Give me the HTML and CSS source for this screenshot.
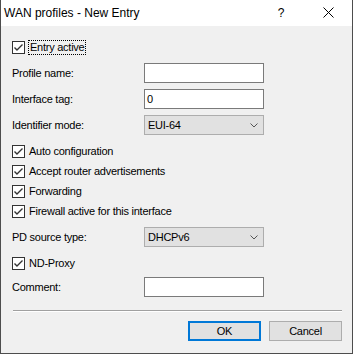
FILE: index.html
```html
<!DOCTYPE html>
<html lang="en">
<head>
  <meta charset="UTF-8" />
  <title>WAN profiles - New Entry</title>
  <link rel="stylesheet" href="styles.css">
</head>
<body>

<div class="window">

  <div class="titlebar">
    <span class="title">WAN profiles - New Entry</span>
    <span class="help">?</span>
    <span class="close">
      <svg width="11" height="11" viewBox="0 0 11 11"><path d="M0.5 0.5 L10.5 10.5 M10.5 0.5 L0.5 10.5" stroke="#000" stroke-width="1" fill="none"/></svg>
    </span>
  </div>

  <div class="content">

    <div class="row check first">
      <span class="box"><svg width="11" height="11" viewBox="0 0 11 11"><path d="M1.5 5.5 L4 8 L9.5 2.5" stroke="#333" stroke-width="1.4" fill="none"/></svg></span>
      <span class="focus">Entry active</span>
    </div>

    <div class="row field">
      <label>Profile name:</label>
      <div class="input"></div>
    </div>

    <div class="row field">
      <label>Interface tag:</label>
      <div class="input">0</div>
    </div>

    <div class="row field">
      <label>Identifier mode:</label>
      <div class="select">EUI-64<svg class="chev" width="8" height="5" viewBox="0 0 8 5"><path d="M0.5 0.5 L4 4 L7.5 0.5" stroke="#555" stroke-width="1" fill="none"/></svg></div>
    </div>

    <div class="checks">
      <div class="row check">
        <span class="box"><svg width="11" height="11" viewBox="0 0 11 11"><path d="M1.5 5.5 L4 8 L9.5 2.5" stroke="#333" stroke-width="1.4" fill="none"/></svg></span>
        <span class="text">Auto configuration</span>
      </div>
      <div class="row check">
        <span class="box"><svg width="11" height="11" viewBox="0 0 11 11"><path d="M1.5 5.5 L4 8 L9.5 2.5" stroke="#333" stroke-width="1.4" fill="none"/></svg></span>
        <span class="text">Accept router advertisements</span>
      </div>
      <div class="row check">
        <span class="box"><svg width="11" height="11" viewBox="0 0 11 11"><path d="M1.5 5.5 L4 8 L9.5 2.5" stroke="#333" stroke-width="1.4" fill="none"/></svg></span>
        <span class="text">Forwarding</span>
      </div>
      <div class="row check">
        <span class="box"><svg width="11" height="11" viewBox="0 0 11 11"><path d="M1.5 5.5 L4 8 L9.5 2.5" stroke="#333" stroke-width="1.4" fill="none"/></svg></span>
        <span class="text">Firewall active for this interface</span>
      </div>
    </div>

    <div class="row field">
      <label>PD source type:</label>
      <div class="select">DHCPv6<svg class="chev" width="8" height="5" viewBox="0 0 8 5"><path d="M0.5 0.5 L4 4 L7.5 0.5" stroke="#555" stroke-width="1" fill="none"/></svg></div>
    </div>

    <div class="row check nd">
      <span class="box"><svg width="11" height="11" viewBox="0 0 11 11"><path d="M1.5 5.5 L4 8 L9.5 2.5" stroke="#333" stroke-width="1.4" fill="none"/></svg></span>
      <span class="text">ND-Proxy</span>
    </div>

    <div class="row field comment">
      <label>Comment:</label>
      <div class="input"></div>
    </div>

    <div class="sep"></div>

    <div class="buttons">
      <div class="btn default">OK</div>
      <div class="btn">Cancel</div>
    </div>

  </div>
</div>

</body>
</html>
```

FILE: styles.css
```css
body { margin: 0; padding: 0; background: #f0f0f0; font-family: 'Liberation Sans', Arial, sans-serif; font-size: 11px; color: #000; }
.window { width: 353px; height: 354px; box-sizing: border-box; border: 1px solid #4d4d4d; border-top: none; background: #f0f0f0; display: flex; flex-direction: column; }
.titlebar { height: 26px; background: #fff; display: flex; align-items: center; flex-shrink: 0; }
.title { font-size: 12px; margin-left: 3px; flex: 1; padding-bottom: 1px; }
.help { font-size: 12px; width: 12px; margin-right: 36px; text-align: center; padding-bottom: 1px; }
.close { width: 11px; height: 11px; margin-right: 18px; margin-bottom: 1px; display: flex; }
.content { padding: 11px 0 0 11px; display: flex; flex-direction: column; letter-spacing: -0.25px; }
.row { height: 20px; display: flex; align-items: center; }
.field { margin-top: 6px; }
.field label { width: 132px; }
.check .box { width: 11px; height: 11px; border: 1px solid #333; background: #fff; display: flex; margin-right: 3px; }
.check .text { padding: 0 1px; }
.focus { border: 1px dotted #000; padding: 0 1px; height: 13px; line-height: 13px; }
.checks { margin-top: 6px; display: flex; flex-direction: column; }
.input { width: 116px; height: 18px; border: 1px solid #7a7a7a; background: #fff; line-height: 18px; padding-left: 2px; }
.select { width: 114px; height: 18px; border: 1px solid #adadad; background: #e1e1e1; line-height: 18px; padding-left: 3px; padding-right: 1px; display: flex; align-items: center; justify-content: space-between; }
.chev { margin-right: 4px; }
.nd { margin-top: 6px; }
.comment { margin-top: 4px; }
.sep { margin: 13px 0 0 1px; width: 329px; border-top: 1px solid #a0a0a0; border-bottom: 1px solid #fff; }
.buttons { display: flex; justify-content: flex-end; gap: 8px; margin-top: 9px; padding-right: 10px; }
.btn { width: 71px; height: 18px; border: 1px solid #adadad; background: #e1e1e1; text-align: center; line-height: 18px; }
.btn.default { border: 2px solid #0078d7; width: 69px; height: 16px; line-height: 16px; }
```
